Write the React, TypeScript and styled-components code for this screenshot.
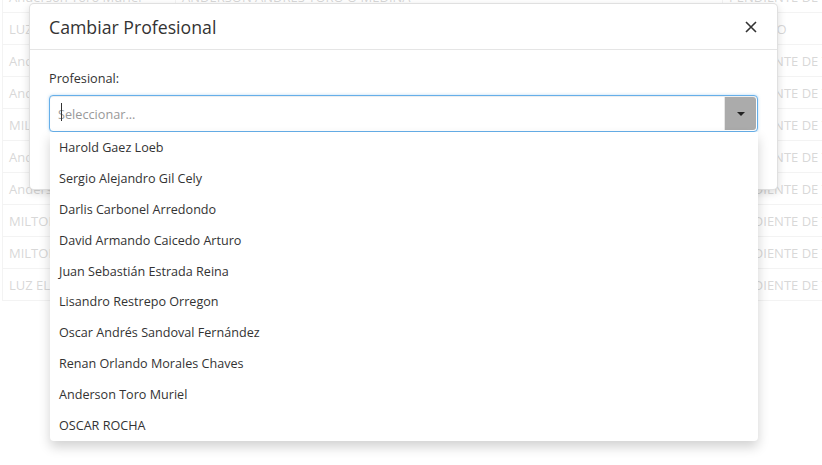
import React from 'react'
import styled, { createGlobalStyle } from 'styled-components'

const GlobalStyle = createGlobalStyle`
  html, body {
    margin: 0;
    padding: 0;
    background: #fff;
    overflow: hidden;
  }
  body {
    font-family: 'Open Sans', 'Noto Sans', sans-serif;
    color: #333;
  }
  * {
    box-sizing: border-box;
  }
`

const Page = styled.div`
  position: relative;
  width: 822px;
  height: 465px;
  overflow: hidden;
`

const Table = styled.table`
  margin: -20px 0 0 2px;
  border-collapse: collapse;
  width: 840px;
  font-size: 13px;
  color: #8c8c8c;
  table-layout: fixed;
`

const Cell = styled.td<{ w?: number }>`
  height: 32px;
  padding: 0 6px;
  border: 1px solid #ddd;
  white-space: nowrap;
  overflow: hidden;
  width: ${({ w }) => (w ? `${w}px` : 'auto')};
`

const Backdrop = styled.div`
  position: absolute;
  inset: 0;
  background: rgba(255, 255, 255, 0.66);
`

const Modal = styled.div`
  position: absolute;
  left: 29px;
  top: 3px;
  width: 749px;
  background: #fff;
  border: 1px solid rgba(0, 0, 0, 0.12);
  border-radius: 5px;
  box-shadow: 0 3px 9px rgba(0, 0, 0, 0.15);
`

const ModalHeader = styled.div`
  display: flex;
  align-items: center;
  justify-content: space-between;
  height: 46px;
  padding: 0 19px;
  border-bottom: 1px solid #e5e5e5;
`

const Title = styled.h4`
  margin: 0;
  font-size: 17.7px;
  font-weight: 400;
  color: #333;
`

const CloseButton = styled.button`
  border: 0;
  background: none;
  padding: 0;
  width: 14px;
  height: 14px;
  display: flex;
  align-items: center;
  justify-content: center;
  cursor: pointer;
`

const ModalBody = styled.div`
  padding: 20px 19px 57px;
`

const Label = styled.label`
  display: block;
  font-size: 12.7px;
  line-height: 17px;
  margin-bottom: 8px;
  color: #333;
`

const SelectWrap = styled.div`
  position: relative;
`

const SelectBox = styled.div`
  display: flex;
  align-items: center;
  height: 37px;
  border: 1px solid #66afe9;
  border-radius: 4px;
  box-shadow: inset 0 1px 1px rgba(0, 0, 0, 0.075), 0 0 3px rgba(102, 175, 233, 0.5);
  background: #fff;
  padding: 1px;
`

const Placeholder = styled.div`
  flex: 1;
  position: relative;
  padding-left: 7px;
  font-size: 12.7px;
  color: #999;
  &:before {
    content: '';
    position: absolute;
    left: 10px;
    top: -2px;
    width: 1px;
    height: 18px;
    background: #333;
  }
`

const ArrowButton = styled.div`
  width: 32px;
  height: 33px;
  border-left: 1px solid #e6e6e6;
  background: #ababab;
  border-radius: 0 3px 3px 0;
  display: flex;
  align-items: center;
  justify-content: center;
`

const Caret = styled.span`
  width: 0;
  height: 0;
  border-left: 4px solid transparent;
  border-right: 4px solid transparent;
  border-top: 4px solid #222;
`

const Menu = styled.ul`
  position: absolute;
  left: 1px;
  right: 0;
  top: 37px;
  margin: 0;
  padding: 0;
  list-style: none;
  background: #fff;
  border-radius: 0 0 4px 4px;
  box-shadow: 0 6px 12px rgba(0, 0, 0, 0.18);
  z-index: 5;
`

const MenuItem = styled.li`
  height: 30.9px;
  padding: 1px 9px 0;
  line-height: 29.9px;
  font-size: 12.6px;
  color: #333;
`

const rows = [
  ['Anderson Toro Muriel', 'ANDERSON ANDRES TORO O MEDINA', 'PENDIENTE DE TRAMITE'],
  ['LUZ ELENA RESTREPO', 'LUZ ELENA RESTREPO GOMEZ', 'INSCRITO'],
  ['Anderson Toro Muriel', 'ANDERSON ANDRES TORO MEDINA', 'PENDIENTE DE TRAMITE'],
  ['Anderson Toro Muriel', 'ANDERSON ANDRES TORO MEDINA', 'PENDIENTE DE TRAMITE'],
  ['MILTON CARDONA', 'MILTON CARDONA RUIZ', 'PENDIENTE DE TRAMITE'],
  ['Anderson Toro Muriel', 'ANDERSON ANDRES TORO MEDINA', 'PENDIENTE DE TRAMITE'],
  ['Anderson Toro Muriel', 'ANDERSON ANDRES TORO MEDINA', 'PENDIENTE DE TRAMITE'],
  ['MILTON CARDONA', 'MILTON CARDONA RUIZ', 'PENDIENTE DE TRAMITE'],
  ['MILTON CARDONA', 'MILTON CARDONA RUIZ', 'PENDIENTE DE TRAMITE'],
  ['LUZ ELENA RESTREPO', 'LUZ ELENA RESTREPO GOMEZ', 'PENDIENTE DE TRAMITE'],
]

const profesionales = [
  'Harold Gaez Loeb',
  'Sergio Alejandro Gil Cely',
  'Darlis Carbonel Arredondo',
  'David Armando Caicedo Arturo',
  'Juan Sebastián Estrada Reina',
  'Lisandro Restrepo Orregon',
  'Oscar Andrés Sandoval Fernández',
  'Renan Orlando Morales Chaves',
  'Anderson Toro Muriel',
  'OSCAR ROCHA',
]

export default function App() {
  return (
    <Page>
      <GlobalStyle />
      <Table>
        <tbody>
          {rows.map((r, i) => (
            <tr key={i}>
              <Cell w={173}>{r[0]}</Cell>
              <Cell w={547}>{r[1]}</Cell>
              <Cell>{r[2]}</Cell>
            </tr>
          ))}
        </tbody>
      </Table>
      <Backdrop />
      <Modal>
        <ModalHeader>
          <Title>Cambiar Profesional</Title>
          <CloseButton aria-label="Cerrar">
            <svg width="12" height="12" viewBox="0 0 12 12">
              <path d="M1 1L11 11M11 1L1 11" stroke="#333" strokeWidth="1.6" />
            </svg>
          </CloseButton>
        </ModalHeader>
        <ModalBody>
          <Label>Profesional:</Label>
          <SelectWrap>
            <SelectBox>
              <Placeholder>Seleccionar...</Placeholder>
              <ArrowButton>
                <Caret />
              </ArrowButton>
            </SelectBox>
            <Menu>
              {profesionales.map((p) => (
                <MenuItem key={p}>{p}</MenuItem>
              ))}
            </Menu>
          </SelectWrap>
        </ModalBody>
      </Modal>
    </Page>
  )
}
